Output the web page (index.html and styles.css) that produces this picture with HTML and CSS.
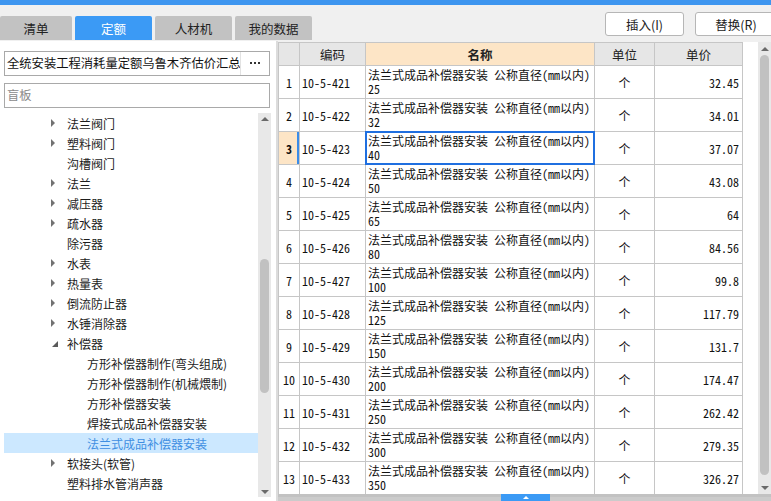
FILE: index.html
```html
<!DOCTYPE html>
<html lang="zh-CN">
<head>
<meta charset="utf-8">
<title>定额</title>
<link rel="stylesheet" href="styles.css">
</head>
<body>
<div class="topbar"></div>
<div class="toolbar">
  <div class="tabs">
    <div class="tab tab-first">清单</div>
    <div class="tab active">定额</div>
    <div class="tab">人材机</div>
    <div class="tab">我的数据</div>
  </div>
  <div class="actions">
    <button class="btn">插入(I)</button>
    <button class="btn btn-wide">替换(R)</button>
  </div>
</div>
<div class="main">
  <aside class="left">
    <div class="lib">
      <span class="lib-name">全统安装工程消耗量定额乌鲁木齐估价汇总表</span>
      <span class="lib-more"><svg width="11" height="3" viewBox="0 0 11 3"><rect x="0" y="0" width="2" height="2" fill="#333"/><rect x="4" y="0" width="2" height="2" fill="#333"/><rect x="8" y="0" width="2" height="2" fill="#333"/></svg></span>
    </div>
    <div class="search">盲板</div>
    <div class="tree-wrap">
      <ul class="tree">
        <li class="node"><span class="tw"></span>法兰阀门</li>
        <li class="node"><span class="tw"></span>塑料阀门</li>
        <li class="node leaf">沟槽阀门</li>
        <li class="node"><span class="tw"></span>法兰</li>
        <li class="node"><span class="tw"></span>减压器</li>
        <li class="node"><span class="tw"></span>疏水器</li>
        <li class="node leaf">除污器</li>
        <li class="node"><span class="tw"></span>水表</li>
        <li class="node"><span class="tw"></span>热量表</li>
        <li class="node"><span class="tw"></span>倒流防止器</li>
        <li class="node"><span class="tw"></span>水锤消除器</li>
        <li class="node"><span class="tw open"></span>补偿器</li>
        <li class="node child">方形补偿器制作(弯头组成)</li>
        <li class="node child">方形补偿器制作(机械煨制)</li>
        <li class="node child">方形补偿器安装</li>
        <li class="node child">焊接式成品补偿器安装</li>
        <li class="node child sel">法兰式成品补偿器安装</li>
        <li class="node"><span class="tw"></span>软接头(软管)</li>
        <li class="node leaf">塑料排水管消声器</li>
        <li class="node leaf">浮标液面计</li>
      </ul>
      <div class="vs">
        <span class="arr-up"></span>
        <span class="thumb"></span>
        <span class="arr-down"></span>
      </div>
    </div>
  </aside>
  <div class="split"></div>
  <section class="grid-wrap">
    <div class="grid-area">
      <div class="grid">
        <div class="h"></div>
        <div class="h">编码</div>
        <div class="h hname">名称</div>
        <div class="h">单位</div>
        <div class="h">单价</div>

        <div class="c rn">1</div><div class="c code">10-5-421</div><div class="c name">法兰式成品补偿器安装 公称直径(mm以内)<br>25</div><div class="c unit">个</div><div class="c price">32.45</div>
        <div class="c rn">2</div><div class="c code">10-5-422</div><div class="c name">法兰式成品补偿器安装 公称直径(mm以内)<br>32</div><div class="c unit">个</div><div class="c price">34.01</div>
        <div class="c rn sel">3</div><div class="c code">10-5-423</div><div class="c name sel">法兰式成品补偿器安装 公称直径(mm以内)<br>40</div><div class="c unit">个</div><div class="c price">37.07</div>
        <div class="c rn">4</div><div class="c code">10-5-424</div><div class="c name">法兰式成品补偿器安装 公称直径(mm以内)<br>50</div><div class="c unit">个</div><div class="c price">43.08</div>
        <div class="c rn">5</div><div class="c code">10-5-425</div><div class="c name">法兰式成品补偿器安装 公称直径(mm以内)<br>65</div><div class="c unit">个</div><div class="c price">64</div>
        <div class="c rn">6</div><div class="c code">10-5-426</div><div class="c name">法兰式成品补偿器安装 公称直径(mm以内)<br>80</div><div class="c unit">个</div><div class="c price">84.56</div>
        <div class="c rn">7</div><div class="c code">10-5-427</div><div class="c name">法兰式成品补偿器安装 公称直径(mm以内)<br>100</div><div class="c unit">个</div><div class="c price">99.8</div>
        <div class="c rn">8</div><div class="c code">10-5-428</div><div class="c name">法兰式成品补偿器安装 公称直径(mm以内)<br>125</div><div class="c unit">个</div><div class="c price">117.79</div>
        <div class="c rn">9</div><div class="c code">10-5-429</div><div class="c name">法兰式成品补偿器安装 公称直径(mm以内)<br>150</div><div class="c unit">个</div><div class="c price">131.7</div>
        <div class="c rn">10</div><div class="c code">10-5-430</div><div class="c name">法兰式成品补偿器安装 公称直径(mm以内)<br>200</div><div class="c unit">个</div><div class="c price">174.47</div>
        <div class="c rn">11</div><div class="c code">10-5-431</div><div class="c name">法兰式成品补偿器安装 公称直径(mm以内)<br>250</div><div class="c unit">个</div><div class="c price">262.42</div>
        <div class="c rn">12</div><div class="c code">10-5-432</div><div class="c name">法兰式成品补偿器安装 公称直径(mm以内)<br>300</div><div class="c unit">个</div><div class="c price">279.35</div>
        <div class="c rn">13</div><div class="c code">10-5-433</div><div class="c name">法兰式成品补偿器安装 公称直径(mm以内)<br>350</div><div class="c unit">个</div><div class="c price">326.27</div>
      </div>
      <div class="blank"></div>
      <div class="vs vs-grid">
        <span class="arr-up"></span>
        <span class="thumb"></span>
        <span class="arr-down"></span>
      </div>
    </div>
    <div class="hsplit"><span class="grip"><span class="grip-arrow"></span></span></div>
  </section>
</div>
</body>
</html>
```

FILE: styles.css
```css
* { box-sizing: border-box; margin: 0; padding: 0; }
html, body { width: 771px; height: 501px; overflow: hidden; }
body {
  background: #f0f0f0;
  font-family: "Noto Sans CJK SC", "Noto Sans", sans-serif;
  font-size: 12px;
  color: #1c1c1c;
}
.topbar { height: 5px; background: #3d95ef; }
.toolbar { height: 36px; display: flex; }
.tabs { display: flex; gap: 3px; margin-top: 11px; height: 24px; }
.tab {
  width: 77px; height: 24px;
  background: #c2c2c2; color: #222;
  border-radius: 2px 2px 0 0;
  display: flex; align-items: center; justify-content: center;
  font-size: 12.5px;
}
.tab-first { width: 72px; }
.tab.active { background: #3b9af5; color: #fff; }
.actions { margin-left: auto; margin-right: -6px; margin-top: 7px; display: flex; gap: 11px; }
.btn {
  width: 79px; height: 24px;
  background: #fff; border: 1px solid #b6b6b6; border-radius: 3px;
  font: inherit; font-size: 12.5px; color: #222;
}
.btn-wide { width: 82px; }

.main { display: flex; height: 460px; }
.left {
  width: 276px; background: #fff;
  display: flex; flex-direction: column;
  padding: 10px 0 0 4px;
}
.lib { width: 266px; height: 25px; border: 1px solid #a9a9a9; display: flex; }
.lib-name {
  flex: 1; overflow: hidden; white-space: nowrap;
  padding-left: 2px; line-height: 23px; font-size: 12.3px; color: #111;
}
.lib-more {
  width: 29px; border-left: 1px solid #e2e2e2;
  display: flex; align-items: center; justify-content: center;
}
.search {
  margin-top: 7px; width: 266px; height: 25px;
  border: 1px solid #a9a9a9; color: #8a8a8a;
  padding-left: 2px; line-height: 23px; font-size: 12.3px;
}
.tree-wrap { margin-top: 5px; height: 384px; display: flex; }
.tree { width: 254px; list-style: none; overflow: hidden; }
.node {
  height: 20px; display: flex; align-items: center;
  padding-left: 46px; white-space: nowrap; color: #1c1c1c;
}
.node.leaf { padding-left: 63px; }
.node.child { padding-left: 83px; }
.node.sel { background: #cce8ff; color: #3f8fe2; }
.tw { width: 17px; height: 20px; display: flex; align-items: center; flex: none; }
.tw::before {
  content: ""; display: block; margin-left: 1px;
  border-left: 4px solid #727272;
  border-top: 4px solid transparent;
  border-bottom: 4px solid transparent;
}
.tw.open::before {
  margin-left: 2px; margin-top: 1px;
  border-top: none;
  border-bottom: 6px solid #5a5a5a;
  border-left: 6px solid transparent;
}

.vs {
  width: 13px; background: #e8e8e8;
  display: flex; flex-direction: column; align-items: center;
}
.arr-up {
  margin-top: 4px;
  border-bottom: 4px solid #6a6a6a;
  border-left: 4px solid transparent;
  border-right: 4px solid transparent;
}
.arr-down {
  margin-top: auto; margin-bottom: 3px;
  border-top: 4px solid #6a6a6a;
  border-left: 4px solid transparent;
  border-right: 4px solid transparent;
}
.thumb { margin-top: 138px; width: 9px; height: 134px; border-radius: 5px; background: #c1c1c1; }

.split { width: 2px; background: #dcdcdc; }
.grid-wrap { flex: 1; display: flex; flex-direction: column; min-width: 0; }
.grid-area {
  flex: 1; display: flex; overflow: hidden;
  background: #fff; border-top: 1px solid #f0f0f0;
}
.grid {
  display: grid;
  grid-template-columns: 20px 65px 228px 59px 87px;
  grid-template-rows: 22px;
  grid-auto-rows: 32px;
  gap: 1px;
  background: #c6c6c6;
  border: 1px solid #c6c6c6;
  align-self: flex-start;
  font-family: "Noto Sans Mono CJK SC", "Liberation Mono", "Noto Sans CJK SC", monospace;
}
.h {
  background: #e6e6e6;
  display: flex; align-items: center; justify-content: center;
  font-family: "Noto Sans CJK SC", sans-serif; font-size: 12.5px; color: #222;
}
.h.hname { background: #fde5c6; font-weight: bold; }
.c { background: #fff; display: flex; align-items: center; font-size: 12px; color: #111; }
.rn { justify-content: center; }
.rn.sel { background: #fde5c6; font-weight: bold; box-shadow: inset -2px 0 0 #3a8ce8; }
.code { padding-left: 2px; }
.name {
  display: block; padding: 2px 0 0 2px; line-height: 14px;
  white-space: nowrap; overflow: hidden;
}
.name.sel { outline: 2px solid #1f6fe0; outline-offset: -1px; overflow: visible; }
.unit { justify-content: center; }
.price { justify-content: flex-end; padding-right: 3px; }
.blank { flex: 1; }
.vs-grid { width: 13px; flex: none; }
.vs-grid .arr-up { margin-top: 5px; }
.vs-grid .thumb { margin-top: 4px; height: 420px; }
.vs-grid .arr-down { margin-bottom: 4px; }

.hsplit { height: 7px; background: #cbcbcb; border-top: 3px solid #c2c2c2; display: flex; }
.grip {
  margin-left: 223px; width: 49px; margin-top: -3px; height: 7px;
  background: #3b9af5;
  display: flex; align-items: center; justify-content: center;
}
.grip-arrow {
  border-bottom: 3px solid #fff;
  border-left: 3px solid transparent;
  border-right: 3px solid transparent;
}
```
